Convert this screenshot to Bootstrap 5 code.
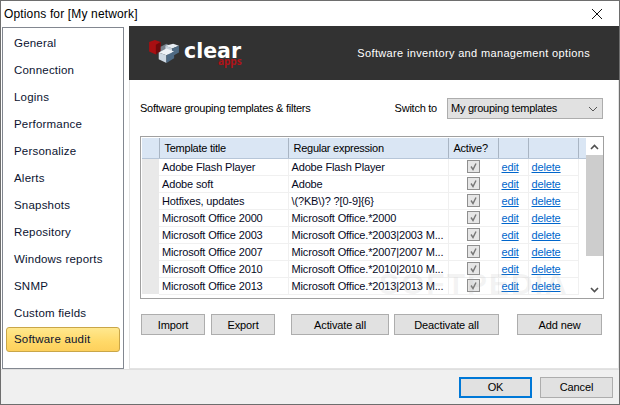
<!DOCTYPE html>
<html lang="en"><head><meta charset="utf-8"><title>Options</title>
<link rel="stylesheet" href="https://cdn.jsdelivr.net/npm/bootstrap@5.3.0/dist/css/bootstrap.min.css">
<style>
html,body{margin:0;height:405px;overflow:hidden;background:#fff}
body{font-family:"Liberation Sans",Arial,sans-serif;font-size:11px;letter-spacing:-.25px;color:#000;line-height:1}
.win{width:620px;height:405px;border:1px solid #6e6e6e;background:#fff}
.titlebar{height:25px;padding:0 0 0 3px;font-size:12px;letter-spacing:.15px}
.closex{width:45px}
.mainrow{height:343px}
.side{width:122px;margin:1px 5px 0 1px;height:342px;background:#fff;border:1px solid #828790;padding:2px 3px 0 3px;flex:none}
.sitem{height:27px;padding-left:7px;font-size:11.5px;letter-spacing:.2px;color:#0b1330;border:1px solid transparent;border-radius:3px}
.sitem.on{height:25px;background:linear-gradient(#ffe88f,#ffd968 60%,#fdd05c);border-color:#c9a648}
.pane{width:490px;border-right:1px solid #e3e3e3;border-bottom:1px solid #e3e3e3;border-left:1px solid #e3e3e3;flex:none}
.hero{height:54px;background:#323232;margin:0 -1px 0 -1px;color:#fff}
.logo{padding-left:19px}
.logo svg{margin-bottom:4px}
.logotext{font-family:"DejaVu Sans",sans-serif;font-weight:700;font-size:20.5px;letter-spacing:0;line-height:20px;margin:0 0 5px 3px;position:relative}
.apps{position:absolute;left:34px;top:16px;font-size:10px;letter-spacing:0;line-height:8px;color:#b01218;font-weight:700;font-family:"Open Sans",sans-serif}
.herotag{padding:1px 29px 0 0;font-size:11px;letter-spacing:.35px;white-space:nowrap}
.filterbar{margin:18px 15px 0 10px;height:21px}
.pick{width:156px;height:21px;background:#e1e1e1;border:1px solid #adadad;padding:0 4px 0 3px}
.switchlab{margin-right:10px}
.gridbox{margin:17px 0 0 10px;width:464px;height:163px;border:1px solid #a0a0a0;padding:1px 1px 0 1px;position:relative}
.gridscroll{width:444px;overflow:hidden;height:160px;flex:none}
.gt{border-collapse:collapse;table-layout:fixed;width:444px;font-size:11px;letter-spacing:-.15px}
.gt thead th{background:#dae6f4;height:20px;font-weight:400;padding:2px 0 0 5px;border-bottom:1px solid #b7c6d8;white-space:nowrap;letter-spacing:-.25px}
.gt thead th+th{border-left:1px solid #a9b5c3}
.gt thead th.headfirst{padding:0}
.gt thead th.headfill{border-left:1px solid #a9b5c3;padding:0}
.gt td{height:17px;padding:1px 0 0 3px;border-right:1px solid #f0f0f0;border-bottom:1px solid #f0f0f0;white-space:nowrap;overflow:hidden;color:#06091e;background:#fff}
.gt td.rowhead{background:#e9e9e9;border:0;padding:0}
.gt td.tick{text-align:center;padding:0}
.gt td.filler{border:0;padding:0}
.gt a{color:#0066cc}
.chk{display:inline-block;width:13px;height:13px;border:1px solid #8f8f8f;background:#e6e6e6;vertical-align:middle}
.chk svg{display:block}
.sb{width:17px;flex:none;background:#fff}
.sbthumb{height:101px;background:#cdcdcd;margin:0}
.sbarrow{height:17px}
.grow{flex:1}
.wbtn{height:21px;background:#e1e1e1;border:1px solid #adadad;border-radius:0;padding:1px 0 0;font-size:11px;letter-spacing:-.1px;color:#000;line-height:1;font-family:inherit}
.actions{margin:15px 0 0 11px;width:462px;height:21px}
.w1{width:64px}.w2{width:64px;margin-left:6px}.w3{width:98px;margin-left:16px}.w4{width:105px;margin-left:5px}.w5{width:85px;margin-left:18px}
.foot{height:35px;background:#f0f0f0;padding:0 6px 0 0;border-top:1px solid #dfdfdf}
.ok{width:73px;height:21px;border:2px solid #0078d7;margin-right:8px}
.cancel{width:73px}
.wm{position:absolute;left:238px;top:132px;font-size:30px;font-weight:700;letter-spacing:2px;color:rgba(160,160,160,.13);pointer-events:none;line-height:1}
</style></head><body>
<div class="win">
 <div class="titlebar d-flex align-items-center justify-content-between">
  <span>Options for [My network]</span>
  <span class="closex d-flex justify-content-center"><svg width="12" height="12" viewBox="0 0 12 12"><path d="M1 1L11 11M11 1L1 11" stroke="#111" stroke-width="1" fill="none"/></svg></span>
 </div>
 <div class="mainrow d-flex">
  <div class="side">
   <div class="sitem d-flex align-items-center">General</div>
   <div class="sitem d-flex align-items-center">Connection</div>
   <div class="sitem d-flex align-items-center">Logins</div>
   <div class="sitem d-flex align-items-center">Performance</div>
   <div class="sitem d-flex align-items-center">Personalize</div>
   <div class="sitem d-flex align-items-center">Alerts</div>
   <div class="sitem d-flex align-items-center">Snapshots</div>
   <div class="sitem d-flex align-items-center">Repository</div>
   <div class="sitem d-flex align-items-center">Windows reports</div>
   <div class="sitem d-flex align-items-center">SNMP</div>
   <div class="sitem d-flex align-items-center">Custom fields</div>
   <div class="sitem on d-flex align-items-center">Software audit</div>
  </div>
  <div class="pane">
   <div class="hero d-flex align-items-center justify-content-between">
    <div class="logo d-flex align-items-center">
     <svg width="33" height="25" viewBox="0 0 34 26">
      <path d="M1 3l6-2 6 2v9l-5 4-7-3z" fill="#a80f12"/><path d="M8 6l5-3v9l-5 4z" fill="#6d0a0c"/>
      <path d="M13 8l6-3 4 2v6l-5 3-5-2z" fill="#77838e"/>
      <path d="M18 7l8-2 6 2-7 3z" fill="#e6ecf2"/><path d="M18 7l7 3v8l-7-3z" fill="#c9d3dd"/><path d="M25 10l7-3v7l-7 4z" fill="#4f6b84"/>
      <path d="M11 14l8-4 8 3-8 4z" fill="#eef2f6"/><path d="M11 14l8 3v8l-8-4z" fill="#ced9e3"/><path d="M19 17l8-4v7l-8 5z" fill="#4e6a84"/>
     </svg>
     <span class="logotext">clear<span class="apps">apps</span></span>
    </div>
    <div class="herotag">Software inventory and management options</div>
   </div>
   <div class="filterbar d-flex align-items-center">
    <span>Software grouping templates &amp; filters</span>
    <span class="grow"></span>
    <span class="switchlab">Switch to</span>
    <div class="pick d-flex align-items-center justify-content-between"><span>My grouping templates</span>
     <svg width="10" height="6" viewBox="0 0 10 6"><path d="M1 1l4 4 4-4" stroke="#555" fill="none"/></svg></div>
   </div>
   <div class="gridbox d-flex">
    <div class="gridscroll">
     <table class="gt">
      <colgroup><col style="width:17px"><col style="width:129px"><col style="width:160px"><col style="width:50px"><col style="width:30px"><col style="width:50px"><col style="width:8px"></colgroup>
      <thead><tr><th class="headfirst"></th><th>Template title</th><th>Regular expression</th><th>Active?</th><th></th><th></th><th class="headfill"></th></tr></thead>
      <tbody>
       <tr><td class="rowhead"></td><td>Adobe Flash Player</td><td>Adobe Flash Player</td><td class="tick"><span class="chk"><svg width="11" height="11" viewBox="0 0 11 11"><path d="M3 5.5l2 3 3-6" stroke="#777" stroke-width="1.4" fill="none"/></svg></span></td><td><a href="#">edit</a></td><td><a href="#">delete</a></td><td class="filler"></td></tr>
       <tr><td class="rowhead"></td><td>Adobe soft</td><td>Adobe</td><td class="tick"><span class="chk"><svg width="11" height="11" viewBox="0 0 11 11"><path d="M3 5.5l2 3 3-6" stroke="#777" stroke-width="1.4" fill="none"/></svg></span></td><td><a href="#">edit</a></td><td><a href="#">delete</a></td><td class="filler"></td></tr>
       <tr><td class="rowhead"></td><td>Hotfixes, updates</td><td>\(?KB\)? ?[0-9]{6}</td><td class="tick"><span class="chk"><svg width="11" height="11" viewBox="0 0 11 11"><path d="M3 5.5l2 3 3-6" stroke="#777" stroke-width="1.4" fill="none"/></svg></span></td><td><a href="#">edit</a></td><td><a href="#">delete</a></td><td class="filler"></td></tr>
       <tr><td class="rowhead"></td><td>Microsoft Office 2000</td><td>Microsoft Office.*2000</td><td class="tick"><span class="chk"><svg width="11" height="11" viewBox="0 0 11 11"><path d="M3 5.5l2 3 3-6" stroke="#777" stroke-width="1.4" fill="none"/></svg></span></td><td><a href="#">edit</a></td><td><a href="#">delete</a></td><td class="filler"></td></tr>
       <tr><td class="rowhead"></td><td>Microsoft Office 2003</td><td>Microsoft Office.*2003|2003 M...</td><td class="tick"><span class="chk"><svg width="11" height="11" viewBox="0 0 11 11"><path d="M3 5.5l2 3 3-6" stroke="#777" stroke-width="1.4" fill="none"/></svg></span></td><td><a href="#">edit</a></td><td><a href="#">delete</a></td><td class="filler"></td></tr>
       <tr><td class="rowhead"></td><td>Microsoft Office 2007</td><td>Microsoft Office.*2007|2007 M...</td><td class="tick"><span class="chk"><svg width="11" height="11" viewBox="0 0 11 11"><path d="M3 5.5l2 3 3-6" stroke="#777" stroke-width="1.4" fill="none"/></svg></span></td><td><a href="#">edit</a></td><td><a href="#">delete</a></td><td class="filler"></td></tr>
       <tr><td class="rowhead"></td><td>Microsoft Office 2010</td><td>Microsoft Office.*2010|2010 M...</td><td class="tick"><span class="chk"><svg width="11" height="11" viewBox="0 0 11 11"><path d="M3 5.5l2 3 3-6" stroke="#777" stroke-width="1.4" fill="none"/></svg></span></td><td><a href="#">edit</a></td><td><a href="#">delete</a></td><td class="filler"></td></tr>
       <tr><td class="rowhead"></td><td>Microsoft Office 2013</td><td>Microsoft Office.*2013|2013 M...</td><td class="tick"><span class="chk"><svg width="11" height="11" viewBox="0 0 11 11"><path d="M3 5.5l2 3 3-6" stroke="#777" stroke-width="1.4" fill="none"/></svg></span></td><td><a href="#">edit</a></td><td><a href="#">delete</a></td><td class="filler"></td></tr>
      </tbody>
     </table>
    </div>
    <div class="sb d-flex flex-column">
     <div class="sbarrow d-flex align-items-center justify-content-center"><svg width="9" height="6" viewBox="0 0 9 6"><path d="M1 5l3.5-3.5L8 5" stroke="#505050" stroke-width="1.6" fill="none"/></svg></div>
     <div class="sbthumb"></div>
     <div class="grow"></div>
     <div class="sbarrow d-flex align-items-center justify-content-center"><svg width="9" height="6" viewBox="0 0 9 6"><path d="M1 1l3.5 3.5L8 1" stroke="#505050" stroke-width="1.6" fill="none"/></svg></div>
    </div>
    <div class="wm">SOFTPEDIA</div>
   </div>
   <div class="actions d-flex">
    <button class="btn wbtn w1">Import</button><button class="btn wbtn w2">Export</button><button class="btn wbtn w3">Activate all</button><button class="btn wbtn w4">Deactivate all</button><button class="btn wbtn w5">Add new</button>
   </div>
  </div>
 </div>
 <div class="foot d-flex align-items-center justify-content-end">
  <button class="btn wbtn ok">OK</button><button class="btn wbtn cancel">Cancel</button>
 </div>
</div>
<script src="https://cdn.jsdelivr.net/npm/bootstrap@5.3.0/dist/js/bootstrap.bundle.min.js"></script>
</body></html>
